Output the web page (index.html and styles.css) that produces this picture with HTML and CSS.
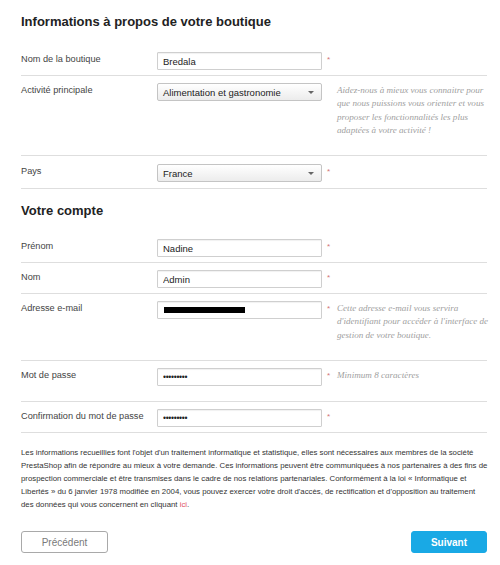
FILE: index.html
```html
<!DOCTYPE html>
<html lang="fr">
<head>
<meta charset="utf-8">
<title>Informations boutique</title>
<link rel="stylesheet" href="styles.css">
</head>
<body>
<form class="page">
  <h2 class="title">Informations à propos de votre boutique</h2>

  <div class="row">
    <label class="label">Nom de la boutique</label>
    <input class="field" type="text" value="Bredala">
    <span class="req">*</span>
  </div>

  <div class="row row--activity">
    <label class="label">Activité principale</label>
    <div class="select"><span>Alimentation et gastronomie</span><i class="caret"></i></div>
    <span class="req"></span>
    <p class="help">Aidez-nous à mieux vous connaitre pour que nous puissions vous orienter et vous proposer les fonctionnalités les plus adaptées à votre activité !</p>
  </div>

  <div class="row row--country">
    <label class="label">Pays</label>
    <div class="select"><span>France</span><i class="caret"></i></div>
    <span class="req">*</span>
  </div>

  <h2 class="title title--sub">Votre compte</h2>

  <div class="row">
    <label class="label">Prénom</label>
    <input class="field" type="text" value="Nadine">
    <span class="req">*</span>
  </div>

  <div class="row">
    <label class="label">Nom</label>
    <input class="field" type="text" value="Admin">
    <span class="req">*</span>
  </div>

  <div class="row row--email">
    <label class="label">Adresse e-mail</label>
    <div class="field"><span class="redacted"></span></div>
    <span class="req">*</span>
    <p class="help">Cette adresse e-mail vous servira d'identifiant pour accéder à l'interface de gestion de votre boutique.</p>
  </div>

  <div class="row row--pass">
    <label class="label">Mot de passe</label>
    <input class="field field--pass" type="password" value="123456789">
    <span class="req">*</span>
    <p class="help">Minimum 8 caractères</p>
  </div>

  <div class="row">
    <label class="label">Confirmation du mot de passe</label>
    <input class="field field--pass" type="password" value="123456789">
    <span class="req">*</span>
  </div>

  <p class="legal">Les informations recueillies font l'objet d'un traitement informatique et statistique, elles sont nécessaires aux membres de la société<br>PrestaShop afin de répondre au mieux à votre demande. Ces informations peuvent être communiquées à nos partenaires à des fins de<br>prospection commerciale et être transmises dans le cadre de nos relations partenariales. Conformément à la loi « Informatique et<br>Libertés » du 6 janvier 1978 modifiée en 2004, vous pouvez exercer votre droit d'accès, de rectification et d'opposition au traitement<br>des données qui vous concernent en cliquant <a href="#" class="link">ici</a>.</p>

  <div class="actions">
    <button type="button" class="btn btn--prev">Précédent</button>
    <button type="button" class="btn btn--next">Suivant</button>
  </div>
</form>
</body>
</html>
```

FILE: styles.css
```css
* { box-sizing: border-box; }

html, body {
  margin: 0;
  background: #fff;
}

body {
  font-family: "Liberation Sans", Arial, sans-serif;
  color: #333;
}

.page {
  width: 500px;
  padding-left: 21px;
}

.title {
  margin: 0;
  padding: 14px 0 15px;
  font-size: 13px;
  line-height: 16px;
  font-weight: bold;
  color: #222;
}

.title--sub {
  padding: 14px 0 13px;
}

.row {
  display: grid;
  grid-template-columns: 136px 165px 15px 158px;
  align-items: start;
  width: 466px;
  padding: 7px 0 5px;
  min-height: 31px;
  border-bottom: 1px solid #dedede;
}

.row--activity { min-height: 80px; }
.row--country { min-height: 33px; padding-top: 8px; }
.row--email { min-height: 67px; }
.row--pass { min-height: 41px; }

.label {
  font-size: 9.2px;
  line-height: 12px;
  color: #444;
  padding-top: 1px;
}

.field {
  display: flex;
  align-items: center;
  width: 165px;
  height: 18px;
  margin: 0;
  padding: 0 5px;
  border: 1px solid #cfcfcf;
  border-radius: 1px;
  background: #fff;
  box-shadow: inset 0 1px 1px rgba(0, 0, 0, 0.06);
  font-family: "Liberation Sans", Arial, sans-serif;
  font-size: 9.5px;
  color: #222;
  outline: none;
}

.field--pass {
  font-size: 8.5px;
  letter-spacing: -0.3px;
}

.redacted {
  display: block;
  width: 81px;
  height: 6px;
  margin-left: 1px;
  background: #000;
}

.select {
  display: flex;
  align-items: center;
  justify-content: space-between;
  width: 165px;
  height: 18px;
  padding: 0 7px 0 5px;
  border: 1px solid #c4c4c4;
  border-radius: 2px;
  background: linear-gradient(#ffffff, #ececec);
  font-size: 9.5px;
  color: #222;
}

.caret {
  width: 0;
  height: 0;
  border-left: 3px solid transparent;
  border-right: 3px solid transparent;
  border-top: 3px solid #666;
}

.req {
  padding: 3px 0 0 5px;
  font-size: 8px;
  color: #d27575;
}

.help {
  margin: 0;
  padding-top: 1px;
  font-family: "Liberation Serif", Georgia, serif;
  font-style: italic;
  font-size: 9.1px;
  line-height: 13.3px;
  color: #a0a0a0;
}

.legal {
  margin: 13px 0 0;
  width: 479px;
  white-space: nowrap;
  font-size: 7.8px;
  line-height: 13px;
  color: #333;
}

.link {
  color: #e0506a;
  text-decoration: none;
}

.actions {
  display: flex;
  justify-content: space-between;
  width: 466px;
  margin-top: 20px;
}

.btn {
  height: 22px;
  border-radius: 3px;
  font-family: "Liberation Sans", Arial, sans-serif;
  font-size: 10px;
  cursor: pointer;
}

.btn--prev {
  width: 87px;
  border: 1px solid #a9a9a9;
  background: #fff;
  color: #7a7a7a;
}

.btn--next {
  width: 76px;
  border: 1px solid #19a9e5;
  background: #19a9e5;
  color: #fff;
  font-weight: bold;
}
```
